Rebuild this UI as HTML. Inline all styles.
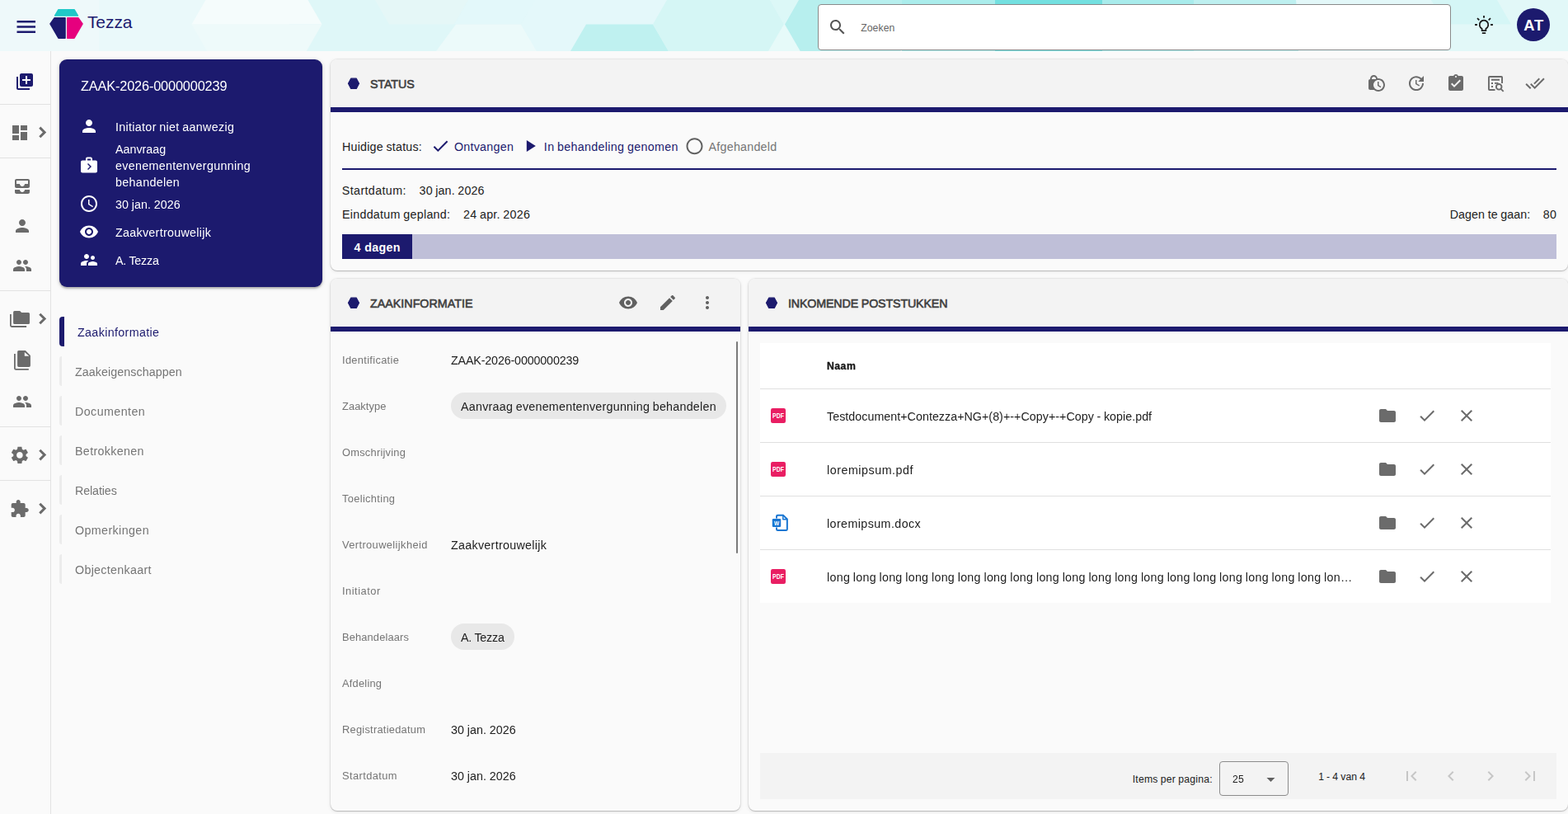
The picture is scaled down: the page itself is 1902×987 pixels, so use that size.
<!DOCTYPE html>
<html lang="nl">
<head>
<meta charset="utf-8">
<title>Tezza - ZAAK-2026-0000000239</title>
<style>
*{box-sizing:border-box;margin:0;padding:0}
html,body{width:1902px;height:987px;overflow:hidden;background:#fafafa}
body{position:relative;font-family:"Liberation Sans","DejaVu Sans",sans-serif;font-size:14px;color:#212121}
svg{display:block;position:absolute;overflow:visible}
.t{position:absolute;white-space:nowrap}
#hdr{position:absolute;left:0;top:0;width:1902px;height:62px;overflow:hidden;background:#e6f9fa}
#search{position:absolute;left:992px;top:5px;width:768px;height:56px;background:#fff;border:1px solid #8a8a8a;border-radius:4px}
#avatar{position:absolute;left:1840px;top:10px;width:40px;height:40px;border-radius:50%;background:#1c1a6e}
#rail{position:absolute;left:0;top:62px;width:62px;height:925px;border-right:1px solid #e2e2e2}
#menu{position:absolute;left:72px;top:384px;width:319px;height:324px}
#rail .dv{position:absolute;left:0;width:61px;height:1px;background:#e2e2e2}
#zcard{position:absolute;left:72px;top:72px;width:319px;height:276px;border-radius:9px;background:#1c1a6e;box-shadow:0 2px 2px rgba(0,0,0,.2),0 1px 5px rgba(0,0,0,.18)}
.mi{position:absolute;left:0;width:3px;height:36px;background:#ececec;border-radius:3px 0 0 3px}
.mi.act{width:6px;background:#1c1a6e;border-radius:4px 0 0 4px}
.card{position:absolute;background:#fafafa;border-radius:8px;box-shadow:0 0 0 1px rgba(0,0,0,.05),0 1px 1px rgba(0,0,0,.17),0 1px 5px rgba(0,0,0,.09)}
.hd{position:absolute;left:0;top:0;right:0;height:64px;background:#f3f3f3;border-bottom:6px solid #1c1a6e;border-radius:8px 8px 0 0}
.chip{position:absolute;height:32px;border-radius:16px;background:#e8e8e8}
.bx{position:absolute}
</style>
</head>
<body>
<div id="hdr">
<svg style="left:0;top:0" width="1902" height="62" viewBox="0 0 1902 62"><rect width="1902" height="62" fill="#e3f8fa"/><rect width="120" height="62" fill="#eef9fa"/><rect x="120" width="232" height="62" fill="#eaf9fa"/><rect x="351" width="289" height="62" fill="#dff7f8"/><polygon points="232.5,29.5 272,-39 351,-39 390.5,29.5" fill="#f5fcfc"/><polygon points="232.5,29.5 390.5,29.5 351,98 272,98" fill="#eefafa"/><polygon points="455,0 472,29.5 551,29.5 568,0" fill="#e5f7f7"/><polygon points="568,0 551,29.5 632,29.5 649,0" fill="#e3f8fa"/><polygon points="553,29.5 632,29.5 651,62 529,62" fill="#ecfafa"/><polygon points="632,29.5 649,0 832,0 792,29.5 711,29.5 692,62 651,62" fill="#e4f8fa"/><polygon points="711,29.5 792,29.5 811,62 692,62" fill="#bff1f0"/><polygon points="792,29.5 831.75,-39.5 911.25,-39.5 951,29.5 911.25,98.5 831.75,98.5" fill="#d5f6f5"/><polygon points="951,29.5 934,0 969,0" fill="#dcf8f7"/><polygon points="951,29.5 932,62 971,62" fill="#e6faf9"/><polygon points="952,29.5 991.75,-39.5 1071.25,-39.5 1111,29.5 1071.25,98.5 991.75,98.5" fill="#b7efee"/><rect x="1094" width="113" height="62" fill="#abedec"/><rect x="1207" width="130" height="62" fill="#74e0e0"/><rect x="1337" width="111" height="62" fill="#a9ecec"/><rect x="1448" width="127" height="62" fill="#bef0f0"/><polygon points="1572,0 1736,0 1753,29.500 1736,62 1578,62" fill="#e3f8f9"/><rect x="1736" width="166" height="62" fill="#e2f8f8"/><polygon points="1736,0 1816,0 1833,29.500 1753,29.500" fill="#d5f6f6"/></svg>

<svg style="left:16px;top:17px" width="30" height="30" viewBox="0 0 24 24"><g transform="translate(0.600 0.480)"><path fill="#1c1a6e" d="M3 18h18v-2H3v2zm0-5h18v-2H3v2zm0-7v2h18V6H3z"/></g></svg>
<svg style="left:60px;top:10px" width="41" height="38" viewBox="0 0 41 38"><g transform="translate(0 0.900)" stroke-linejoin="round" stroke-width="1.600"><path fill="#1fc8c8" stroke="#1fc8c8" d="M11 0.800h19l4.300 7.300H6.700z"/><path fill="#1c1a6e" stroke="#1c1a6e" d="M6 11h13V35.300h-8L1 18z"/><path fill="#e6007e" stroke="#e6007e" d="M21.800 11H35L40 18l-10 17.300h-8.200z"/></g></svg>

<div class="t" style="left:105.93px;top:15.40px;font-size:21px;line-height:24px;letter-spacing:-0.065px;color:#1c1a6e;">Tezza</div>
<div id="search">
<svg style="left:11px;top:15px" width="24" height="24" viewBox="0 0 24 24"><path fill="#555" d="M15.500 14h-.79l-.28-.270C15.410 12.590 16 11.110 16 9.500 16 5.910 13.090 3 9.500 3S3 5.910 3 9.500 5.910 16 9.500 16c1.610 0 3.090-.59 4.230-1.570l.27.280v.790l5 4.990L20.490 19l-4.990-5zm-6 0C7.010 14 5 11.990 5 9.500S7.010 5 9.500 5 14 7.010 14 9.500 11.990 14 9.500 14z"/></svg>
<div class="t" style="left:51.17px;top:20.00px;font-size:12.24px;line-height:16px;letter-spacing:0.075px;color:#666;">Zoeken</div>
</div>
<svg style="left:1788px;top:18px" width="24" height="24" viewBox="0 0 24 24"><g fill="none" stroke="#1a1a1a" stroke-width="1.800"><path d="M9.600 19.200V16.700A5.300 5.300 0 1 1 14.400 16.700V19.200z" stroke-linejoin="round"/><path d="M9.800 22.100h4.400M12 1.100v2.600M1.100 12h2.800M20.100 12h2.800M4 4.100l2.300 2.300M20 4.100l-2.300 2.300"/></g></svg>

<div id="avatar">
<div class="t" style="left:8.34px;top:9.70px;font-size:18.36px;line-height:22px;letter-spacing:0.688px;color:#fff;font-weight:bold;">AT</div>
</div>
</div>
<div id="rail">
<svg style="left:18px;top:25px" width="24" height="24" viewBox="0 0 24 24"><path fill="#1c1a6e" d="M4 6H2v14c0 1.100.9 2 2 2h14v-2H4V6zm16-4H8c-1.100 0-2 .9-2 2v12c0 1.100.9 2 2 2h12c1.100 0 2-.9 2-2V4c0-1.100-.9-2-2-2zm-1 9h-4v4h-2v-4H9V9h4V5h2v4h4v2z"/></svg>
<div class="dv" style="top:64px"></div>
<div class="dv" style="top:129px"></div>
<div class="dv" style="top:290px"></div>
<div class="dv" style="top:455px"></div>
<div class="dv" style="top:520px"></div>
<svg style="left:12px;top:87px" width="24" height="24" viewBox="0 0 24 24"><path fill="#6b6b6b" d="M3 13h8V3H3v10zm0 8h8v-6H3v6zm10 0h8V11h-8v10zm0-18v6h8V3h-8z"/></svg>
<svg style="left:39px;top:86px" width="24" height="24" viewBox="0 0 24 24"><g transform="translate(0.000 0.400)"><path fill="none" stroke="#6b6b6b" stroke-width="3" d="M9.280 6.200L15.080 12l-5.800 5.800"/></g></svg>
<svg style="left:15px;top:152px" width="24" height="24" viewBox="0 0 24 24"><path fill="#6b6b6b" d="M19 3H5c-1.100 0-2 .9-2 2v7c0 1.100.9 2 2 2h14c1.100 0 2-.9 2-2V5c0-1.100-.9-2-2-2zm0 6h-4c0 1.620-1.380 3-3 3s-3-1.380-3-3H5V5h14v4zm-4 7h6v3c0 1.100-.9 2-2 2H5c-1.100 0-2-.9-2-2v-3h6c0 1.660 1.340 3 3 3s3-1.340 3-3z"/></svg>
<svg style="left:15px;top:200px" width="24" height="24" viewBox="0 0 24 24"><path fill="#6b6b6b" d="M12 12c2.210 0 4-1.790 4-4s-1.790-4-4-4-4 1.790-4 4 1.790 4 4 4zm0 2c-2.670 0-8 1.340-8 4v2h16v-2c0-2.660-5.330-4-8-4z"/></svg>
<svg style="left:15px;top:248px" width="24" height="24" viewBox="0 0 24 24"><path fill="#6b6b6b" d="M16 11c1.660 0 2.990-1.340 2.990-3S17.660 5 16 5c-1.660 0-3 1.340-3 3s1.340 3 3 3zm-8 0c1.660 0 2.990-1.340 2.990-3S9.660 5 8 5C6.340 5 5 6.340 5 8s1.340 3 3 3zm0 2c-2.330 0-7 1.170-7 3.500V19h14v-2.500c0-2.330-4.670-3.500-7-3.500zm8 0c-.29 0-.62.020-.97.050 1.160.840 1.970 1.970 1.970 3.450V19h6v-2.500c0-2.330-4.670-3.500-7-3.500z"/></svg>
<svg style="left:12px;top:315px" width="24" height="20" viewBox="0 0 24 20"><path fill="none" stroke="#6b6b6b" stroke-width="1.800" d="M0.900 4V17.600q0 1.400 1.400 1.400H20.100"/><path fill="#6b6b6b" d="M5.600 0h6.500l2.100 2.100h8.300q1.500 0 1.500 1.500v10.800q0 1.500-1.500 1.500H5.600q-1.500 0-1.500-1.500V1.500Q4.100 0 5.600 0z"/></svg>
<svg style="left:39px;top:312px" width="24" height="24" viewBox="0 0 24 24"><g transform="translate(0.000 0.500)"><path fill="none" stroke="#6b6b6b" stroke-width="3" d="M9.280 6.200L15.080 12l-5.800 5.800"/></g></svg>
<svg style="left:17px;top:363px" width="20" height="24" viewBox="0 0 20 24"><path fill="none" stroke="#6b6b6b" stroke-width="1.800" d="M0.900 3.900V21.500q0 1.400 1.400 1.400H17.800"/><path fill="#6b6b6b" fill-rule="evenodd" d="M5.700 0h8.200l6 5.900v12.400q0 1.600-1.600 1.600H5.700q-1.600 0-1.600-1.600V1.600Q4.100 0 5.700 0zM12.800 1.900v4.900h5.500z"/></svg>
<svg style="left:15px;top:413px" width="24" height="24" viewBox="0 0 24 24"><path fill="#6b6b6b" d="M16 11c1.660 0 2.990-1.340 2.990-3S17.660 5 16 5c-1.660 0-3 1.340-3 3s1.340 3 3 3zm-8 0c1.660 0 2.990-1.340 2.990-3S9.660 5 8 5C6.340 5 5 6.340 5 8s1.340 3 3 3zm0 2c-2.330 0-7 1.170-7 3.500V19h14v-2.500c0-2.330-4.670-3.500-7-3.500zm8 0c-.29 0-.62.020-.97.050 1.160.840 1.970 1.970 1.970 3.450V19h6v-2.500c0-2.330-4.670-3.500-7-3.500z"/></svg>
<svg style="left:11px;top:477px" width="25.5" height="25.5" viewBox="0 0 24 24"><g transform="translate(0.141 0.141)"><path fill="#6b6b6b" d="M19.140 12.940c.040-.3.060-.610.060-.940 0-.320-.020-.640-.070-.940l2.030-1.580c.180-.140.230-.410.120-.610l-1.920-3.320c-.120-.220-.370-.290-.590-.220l-2.390.960c-.5-.380-1.030-.7-1.620-.940l-.360-2.540c-.040-.240-.240-.410-.480-.410h-3.840c-.240 0-.430.170-.470.410l-.360 2.540c-.590.240-1.130.570-1.620.940l-2.390-.960c-.220-.080-.470 0-.590.220L2.740 8.870c-.120.210-.080.470.120.610l2.030 1.580c-.050.3-.090.630-.090.940s.020.640.070.940l-2.030 1.580c-.180.140-.230.410-.120.610l1.920 3.320c.120.220.370.290.590.220l2.390-.960c.5.380 1.030.7 1.620.940l.360 2.540c.050.240.240.410.480.410h3.840c.240 0 .440-.170.470-.410l.360-2.540c.590-.240 1.130-.560 1.620-.940l2.390.960c.220.080.470 0 .590-.220l1.920-3.320c.120-.220.070-.470-.120-.610l-2.010-1.580zM12 15.600c-1.980 0-3.600-1.620-3.600-3.600s1.620-3.600 3.600-3.600 3.600 1.620 3.600 3.600-1.620 3.600-3.600 3.600z"/></g></svg>
<svg style="left:39px;top:477px" width="24" height="24" viewBox="0 0 24 24"><g transform="translate(0.000 0.600)"><path fill="none" stroke="#6b6b6b" stroke-width="3" d="M9.280 6.200L15.080 12l-5.800 5.800"/></g></svg>
<svg style="left:11px;top:542px" width="24" height="24" viewBox="0 0 24 24"><g transform="translate(0.700 0.900)"><path fill="#6b6b6b" d="M20.500 11H19V7c0-1.100-.9-2-2-2h-4V3.500C13 2.120 11.880 1 10.500 1S8 2.120 8 3.500V5H4c-1.100 0-1.990.9-1.990 2v3.800H3.500c1.490 0 2.700 1.210 2.700 2.700s-1.210 2.700-2.700 2.700H2V20c0 1.100.9 2 2 2h3.800v-1.500c0-1.490 1.210-2.700 2.700-2.700 1.490 0 2.700 1.210 2.700 2.700V22H17c1.100 0 2-.9 2-2v-4h1.500c1.380 0 2.500-1.120 2.500-2.500S21.880 11 20.500 11z"/></g></svg>
<svg style="left:39px;top:542px" width="24" height="24" viewBox="0 0 24 24"><g transform="translate(0.000 0.600)"><path fill="none" stroke="#6b6b6b" stroke-width="3" d="M9.280 6.200L15.080 12l-5.800 5.800"/></g></svg>
</div>
<div id="zcard">
<div class="t" style="left:26.00px;top:20.00px;font-size:16.32px;line-height:24px;letter-spacing:-0.157px;color:#fff;will-change:transform;">ZAAK-2026-0000000239</div>
<svg style="left:24px;top:69px" width="24" height="24" viewBox="0 0 24 24"><path fill="#fff" d="M12 12c2.210 0 4-1.790 4-4s-1.790-4-4-4-4 1.790-4 4 1.790 4 4 4zm0 2c-2.670 0-8 1.340-8 4v2h16v-2c0-2.660-5.330-4-8-4z"/></svg>
<div class="t" style="left:68.00px;top:72.00px;font-size:14.28px;line-height:20px;letter-spacing:0.325px;color:#fff;word-spacing:-0.656px;will-change:transform;">Initiator niet aanwezig</div>
<svg style="left:24px;top:115px" width="24" height="24" viewBox="0 0 24 24"><g transform="translate(0.000 0.600)"><path fill="#fff" d="M20 7h-4V5c0-.55-.22-1.050-.59-1.410C15.050 3.220 14.550 3 14 3h-4c-1.100 0-2 .9-2 2v2H4c-1.100 0-2 .9-2 2v11c0 1.100.9 2 2 2h16c1.100 0 2-.9 2-2V9c0-1.100-.9-2-2-2zM10 5h4v2h-4V5zm1 13.500l-1-1 3-3-3-3 1-1 4 4-4 4z"/></g></svg>
<div class="t" style="left:68.00px;top:99.00px;font-size:14.28px;line-height:20px;letter-spacing:0.011px;color:#fff;will-change:transform;">Aanvraag</div>
<div class="t" style="left:68.00px;top:119.00px;font-size:14.28px;line-height:20px;letter-spacing:0.333px;color:#fff;will-change:transform;">evenementenvergunning</div>
<div class="t" style="left:68.00px;top:139.00px;font-size:14.28px;line-height:20px;letter-spacing:0.353px;color:#fff;will-change:transform;">behandelen</div>
<svg style="left:24px;top:163px" width="24" height="24" viewBox="0 0 24 24"><path fill="#fff" d="M11.990 2C6.470 2 2 6.480 2 12s4.470 10 9.990 10C17.520 22 22 17.520 22 12S17.520 2 11.990 2zM12 20c-4.420 0-8-3.580-8-8s3.580-8 8-8 8 3.580 8 8-3.580 8-8 8zm.5-13H11v6l5.250 3.150.75-1.230-4.500-2.670z"/></svg>
<div class="t" style="left:68.00px;top:166.00px;font-size:14.28px;line-height:20px;letter-spacing:0.100px;color:#fff;word-spacing:-0.431px;will-change:transform;">30 jan. 2026</div>
<svg style="left:24px;top:197px" width="24" height="24" viewBox="0 0 24 24"><path fill="#fff" d="M12 4.500C7 4.500 2.730 7.610 1 12c1.730 4.390 6 7.500 11 7.500s9.270-3.110 11-7.500c-1.730-4.390-6-7.500-11-7.500zM12 17c-2.760 0-5-2.240-5-5s2.240-5 5-5 5 2.240 5 5-2.240 5-5 5zm0-8c-1.660 0-3 1.340-3 3s1.340 3 3 3 3-1.340 3-3-1.340-3-3-3z"/></svg>
<div class="t" style="left:68.00px;top:200.00px;font-size:14.28px;line-height:20px;letter-spacing:0.301px;color:#fff;will-change:transform;">Zaakvertrouwelijk</div>
<svg style="left:24px;top:231px" width="24" height="24" viewBox="0 0 24 24"><path fill="#fff" d="M16.500 12c1.380 0 2.490-1.120 2.490-2.500S17.880 7 16.500 7C15.120 7 14 8.120 14 9.500s1.120 2.500 2.500 2.500zM9 11c1.660 0 2.990-1.340 2.990-3S10.660 5 9 5C7.340 5 6 6.340 6 8s1.340 3 3 3zm7.500 3c-1.830 0-5.500.92-5.500 2.750V19h11v-2.250c0-1.830-3.670-2.750-5.500-2.750zM9 13c-2.330 0-7 1.170-7 3.500V19h7v-2.250c0-.85.33-2.340 2.370-3.470C10.500 13.100 9.660 13 9 13z"/></svg>
<div class="t" style="left:68.00px;top:234.00px;font-size:14.28px;line-height:20px;letter-spacing:-0.210px;color:#fff;word-spacing:-0.121px;will-change:transform;">A. Tezza</div>
</div>
<nav id="menu">
<div class="mi act" style="top:0px"></div>
<div class="t" style="left:22.00px;top:9.00px;font-size:14.28px;line-height:20px;letter-spacing:0.359px;color:#1c1a6e;will-change:transform;">Zaakinformatie</div>
<div class="mi" style="top:48px"></div>
<div class="t" style="left:19.00px;top:57.00px;font-size:14.28px;line-height:20px;letter-spacing:0.071px;color:#757575;will-change:transform;">Zaakeigenschappen</div>
<div class="mi" style="top:96px"></div>
<div class="t" style="left:19.00px;top:105.00px;font-size:14.28px;line-height:20px;letter-spacing:0.424px;color:#757575;will-change:transform;">Documenten</div>
<div class="mi" style="top:144px"></div>
<div class="t" style="left:19.00px;top:153.00px;font-size:14.28px;line-height:20px;letter-spacing:0.345px;color:#757575;will-change:transform;">Betrokkenen</div>
<div class="mi" style="top:192px"></div>
<div class="t" style="left:19.00px;top:201.00px;font-size:14.28px;line-height:20px;letter-spacing:-0.105px;color:#757575;will-change:transform;">Relaties</div>
<div class="mi" style="top:240px"></div>
<div class="t" style="left:19.00px;top:249.00px;font-size:14.28px;line-height:20px;letter-spacing:0.395px;color:#757575;will-change:transform;">Opmerkingen</div>
<div class="mi" style="top:288px"></div>
<div class="t" style="left:19.00px;top:297.00px;font-size:14.28px;line-height:20px;letter-spacing:0.301px;color:#757575;will-change:transform;">Objectenkaart</div>
</nav>
<div class="card" id="status" style="left:401px;top:72px;width:1501px;height:256px">
<div class="hd"></div>
<svg style="left:16px;top:17px" width="24" height="24" viewBox="0 0 24 24"><g transform="translate(0.000 0.300)"><path fill="#1c1a6e" stroke="#1c1a6e" stroke-width="1.2" stroke-linejoin="round" d="M5.500 12l3.200-6.100h6.600L18.500 12l-3.200 6.100H8.700z"/></g></svg>
<div class="t" style="left:47.91px;top:20.00px;font-size:14.28px;line-height:20px;letter-spacing:-0.063px;color:#404040;-webkit-text-stroke:0.6px #404040;">STATUS</div>
<svg style="left:1257px;top:17px" width="24" height="24" viewBox="0 0 24 24"><path fill="#6b6b6b" d="M14.500 14.200l2.900 1.700-.8 1.300L13 15v-5h1.500v4.200zM22 14c0 4.410-3.590 8-8 8-2.020 0-3.860-.76-5.270-2H4c-1.150 0-2-.85-2-2V9c0-1.120.89-1.960 2-2v-.5C4 4.010 6.010 2 8.500 2c2.340 0 4.240 1.790 4.460 4.080.34-.05.69-.08 1.040-.08 4.410 0 8 3.590 8 8zM6 7h5v-.74C10.880 4.990 9.800 4 8.500 4 7.120 4 6 5.120 6 6.500V7zm14 7c0-3.310-2.690-6-6-6s-6 2.690-6 6 2.690 6 6 6 6-2.690 6-6z"/></svg>
<svg style="left:1305px;top:17px" width="24" height="24" viewBox="0 0 24 24"><path fill="#6b6b6b" d="M21 10.120h-6.780l2.740-2.820c-2.730-2.700-7.150-2.800-9.880-.1-2.730 2.710-2.730 7.080 0 9.790s7.150 2.710 9.880 0C18.320 15.650 19 14.080 19 12.100h2c0 1.980-.88 4.550-2.640 6.290-3.510 3.480-9.210 3.480-12.720 0-3.500-3.470-3.530-9.110-.02-12.580s9.140-3.470 12.650 0L21 3v7.120zM12.500 8v4.250l3.500 2.080-.72 1.210L11 13V8h1.500z"/></svg>
<svg style="left:1353px;top:17px" width="24" height="24" viewBox="0 0 24 24"><path fill="#6b6b6b" d="M19 3h-4.180C14.400 1.840 13.300 1 12 1c-1.300 0-2.400.84-2.820 2H5c-1.100 0-2 .9-2 2v14c0 1.100.9 2 2 2h14c1.100 0 2-.9 2-2V5c0-1.100-.9-2-2-2zm-7 0c.55 0 1 .45 1 1s-.45 1-1 1-1-.45-1-1 .45-1 1-1zm-2 14l-4-4 1.410-1.410L10 14.170l6.590-6.590L18 9l-8 8z"/></svg>
<svg style="left:1401px;top:17px" width="24" height="24" viewBox="0 0 24 24"><g fill="none" stroke="#6b6b6b" stroke-width="1.900"><path d="M11.500 20.050H4.800q-.85 0-.85-.85V4.800q0-.85.85-.85h14.400q.85 0 .85.850v7.200"/><circle cx="16.200" cy="16.300" r="3.300"/><path d="M18.600 18.800l3.100 3.100"/></g><path fill="#6b6b6b" d="M7 6.800h10v2H7zM7 11h2v2H7zM11 11h4.500v1.800H11zM7 15h2v2H7z"/></svg>
<svg style="left:1449px;top:17px" width="24" height="24" viewBox="0 0 24 24"><path fill="#6b6b6b" d="M18 7l-1.410-1.410-6.340 6.340 1.410 1.410L18 7zm4.240-1.410L11.660 16.170 7.480 12l-1.410 1.410L11.660 19l12-12-1.420-1.410zM.410 13.410L6 19l1.410-1.410L1.830 12 .410 13.410z"/></svg>
<div class="t" style="left:14.00px;top:96.00px;font-size:14.28px;line-height:20px;letter-spacing:0.212px;color:#212121;word-spacing:-0.542px;">Huidige status:</div>
<svg style="left:121px;top:93px" width="24" height="24" viewBox="0 0 24 24"><g transform="translate(0.300 0.000)"><path fill="#1c1a6e" d="M9 16.170L4.830 12l-1.420 1.410L9 19 21 7l-1.410-1.410z"/></g></svg>
<div class="t" style="left:149.96px;top:96.00px;font-size:14.28px;line-height:20px;letter-spacing:0.260px;color:#1c1a6e;">Ontvangen</div>
<svg style="left:229px;top:93px" width="24" height="24" viewBox="0 0 24 24"><g transform="translate(0.800 0.000)"><path fill="#1c1a6e" d="M8 5v14l11-7z"/></g></svg>
<div class="t" style="left:258.85px;top:96.00px;font-size:14.28px;line-height:20px;letter-spacing:0.322px;color:#1c1a6e;word-spacing:-0.653px;">In behandeling genomen</div>
<svg style="left:429px;top:93px" width="24" height="24" viewBox="0 0 24 24"><g transform="translate(0.500 0.200)"><path fill="#616161" d="M12 2C6.480 2 2 6.480 2 12s4.480 10 10 10 10-4.480 10-10S17.520 2 12 2zm0 18c-4.420 0-8-3.580-8-8s3.580-8 8-8 8 3.580 8 8-3.580 8-8 8z"/></g></svg>
<div class="t" style="left:458.57px;top:96.00px;font-size:14.28px;line-height:20px;letter-spacing:0.245px;color:#757575;">Afgehandeld</div>
<div class="bx" style="left:14px;top:132px;width:1473px;height:2px;background:#1c1a6e"></div>
<div class="t" style="left:13.81px;top:149.00px;font-size:14.28px;line-height:20px;letter-spacing:0.390px;color:#212121;">Startdatum:</div>
<div class="t" style="left:107.62px;top:149.00px;font-size:14.28px;line-height:20px;letter-spacing:0.100px;color:#212121;word-spacing:-0.431px;">30 jan. 2026</div>
<div class="t" style="left:14.00px;top:178.00px;font-size:14.28px;line-height:20px;letter-spacing:0.276px;color:#212121;word-spacing:-0.606px;">Einddatum gepland:</div>
<div class="t" style="left:161.04px;top:178.00px;font-size:14.28px;line-height:20px;letter-spacing:0.236px;color:#212121;word-spacing:-0.567px;">24 apr. 2026</div>
<div class="t" style="left:1357.70px;top:178.00px;font-size:14.28px;line-height:20px;letter-spacing:0.062px;color:#212121;word-spacing:-0.393px;">Dagen te gaan:</div>
<div class="t" style="left:1470.84px;top:178.00px;font-size:14.28px;line-height:20px;letter-spacing:0.126px;color:#212121;">80</div>
<div class="bx" style="left:14px;top:212px;width:1473px;height:30px;background:#bfbfd8"></div>
<div class="bx" style="left:14px;top:212px;width:85px;height:30px;background:#1c1a6e"></div>
<div class="t" style="left:28.62px;top:217.50px;font-size:14.28px;line-height:20px;letter-spacing:0.340px;color:#fff;font-weight:bold;">4 dagen</div>
</div>
<div class="card" id="info" style="left:401px;top:338px;width:497px;height:645px">
<div class="hd"></div>
<svg style="left:16px;top:17px" width="24" height="24" viewBox="0 0 24 24"><g transform="translate(0.000 0.300)"><path fill="#1c1a6e" stroke="#1c1a6e" stroke-width="1.2" stroke-linejoin="round" d="M5.500 12l3.200-6.100h6.600L18.500 12l-3.200 6.100H8.700z"/></g></svg>
<div class="t" style="left:47.97px;top:20.00px;font-size:14.28px;line-height:20px;letter-spacing:0.023px;color:#404040;-webkit-text-stroke:0.6px #404040;">ZAAKINFORMATIE</div>
<svg style="left:349px;top:17px" width="24" height="24" viewBox="0 0 24 24"><path fill="#616161" d="M12 4.500C7 4.500 2.730 7.610 1 12c1.730 4.390 6 7.500 11 7.500s9.270-3.110 11-7.500c-1.730-4.390-6-7.500-11-7.500zM12 17c-2.760 0-5-2.240-5-5s2.240-5 5-5 5 2.240 5 5-2.240 5-5 5zm0-8c-1.660 0-3 1.340-3 3s1.340 3 3 3 3-1.340 3-3-1.340-3-3-3z"/></svg>
<svg style="left:397px;top:17px" width="24" height="24" viewBox="0 0 24 24"><path fill="#616161" d="M3 17.250V21h3.750L17.810 9.940l-3.750-3.750L3 17.250zM20.710 7.040c.39-.39.39-1.020 0-1.410l-2.340-2.340c-.39-.39-1.020-.39-1.410 0l-1.830 1.830 3.750 3.750 1.830-1.830z"/></svg>
<svg style="left:445px;top:17px" width="24" height="24" viewBox="0 0 24 24"><path fill="#616161" d="M12 8c1.100 0 2-.9 2-2s-.9-2-2-2-2 .9-2 2 .9 2 2 2zm0 2c-1.100 0-2 .9-2 2s.9 2 2 2 2-.9 2-2-.9-2-2-2zm0 6c-1.100 0-2 .9-2 2s.9 2 2 2 2-.9 2-2-.9-2-2-2z"/></svg>
<div class="bx" style="left:492px;top:76px;width:2px;height:257px;background:#7a7a7a;border-radius:1px"></div>
<div class="t" style="left:14.00px;top:89.50px;font-size:12.85px;line-height:18px;letter-spacing:0.320px;color:#757575;will-change:transform;">Identificatie</div>
<div class="t" style="left:146.00px;top:89.00px;font-size:14.28px;line-height:20px;letter-spacing:-0.138px;color:#212121;will-change:transform;">ZAAK-2026-0000000239</div>
<div class="t" style="left:14.00px;top:145.50px;font-size:12.85px;line-height:18px;letter-spacing:0.075px;color:#757575;will-change:transform;">Zaaktype</div>
<div class="chip" style="left:146px;top:138px;width:334.374px;height:32px;"></div>
<div class="t" style="left:158.00px;top:145.00px;font-size:14.28px;line-height:20px;letter-spacing:0.254px;color:#212121;word-spacing:-0.585px;will-change:transform;">Aanvraag evenementenvergunning behandelen</div>
<div class="t" style="left:14.00px;top:201.50px;font-size:12.85px;line-height:18px;letter-spacing:0.243px;color:#757575;will-change:transform;">Omschrijving</div>
<div class="t" style="left:14.00px;top:257.50px;font-size:12.85px;line-height:18px;letter-spacing:0.331px;color:#757575;will-change:transform;">Toelichting</div>
<div class="t" style="left:14.00px;top:313.50px;font-size:12.85px;line-height:18px;letter-spacing:0.391px;color:#757575;will-change:transform;">Vertrouwelijkheid</div>
<div class="t" style="left:146.00px;top:313.00px;font-size:14.28px;line-height:20px;letter-spacing:0.301px;color:#212121;will-change:transform;">Zaakvertrouwelijk</div>
<div class="t" style="left:14.00px;top:369.50px;font-size:12.85px;line-height:18px;letter-spacing:0.517px;color:#757575;will-change:transform;">Initiator</div>
<div class="t" style="left:14.00px;top:425.50px;font-size:12.85px;line-height:18px;letter-spacing:0.141px;color:#757575;will-change:transform;">Behandelaars</div>
<div class="chip" style="left:146px;top:418px;width:76.9051px;height:32px;"></div>
<div class="t" style="left:158.00px;top:425.00px;font-size:14.28px;line-height:20px;letter-spacing:-0.210px;color:#212121;word-spacing:-0.121px;will-change:transform;">A. Tezza</div>
<div class="t" style="left:14.00px;top:481.50px;font-size:12.85px;line-height:18px;letter-spacing:0.229px;color:#757575;will-change:transform;">Afdeling</div>
<div class="t" style="left:14.00px;top:537.50px;font-size:12.85px;line-height:18px;letter-spacing:0.251px;color:#757575;will-change:transform;">Registratiedatum</div>
<div class="t" style="left:146.00px;top:537.00px;font-size:14.28px;line-height:20px;letter-spacing:0.100px;color:#212121;word-spacing:-0.431px;will-change:transform;">30 jan. 2026</div>
<div class="t" style="left:14.00px;top:593.50px;font-size:12.85px;line-height:18px;letter-spacing:0.416px;color:#757575;will-change:transform;">Startdatum</div>
<div class="t" style="left:146.00px;top:593.00px;font-size:14.28px;line-height:20px;letter-spacing:0.100px;color:#212121;word-spacing:-0.431px;will-change:transform;">30 jan. 2026</div>
</div>
<div class="card" id="post" style="left:908px;top:338px;width:994px;height:645px">
<div class="hd"></div>
<svg style="left:16px;top:17px" width="24" height="24" viewBox="0 0 24 24"><g transform="translate(0.000 0.300)"><path fill="#1c1a6e" stroke="#1c1a6e" stroke-width="1.2" stroke-linejoin="round" d="M5.500 12l3.200-6.100h6.600L18.500 12l-3.200 6.100H8.700z"/></g></svg>
<div class="t" style="left:48.05px;top:20.00px;font-size:14.28px;line-height:20px;letter-spacing:-0.159px;color:#404040;-webkit-text-stroke:0.6px #404040;">INKOMENDE POSTSTUKKEN</div>
<div class="bx" style="left:14px;top:78px;width:959px;height:315px;background:#fff"></div>
<div class="t" style="left:95.00px;top:98.00px;font-size:12.24px;line-height:16px;letter-spacing:0.488px;color:#161616;font-weight:bold;-webkit-text-stroke:0.3px #161616;will-change:transform;">Naam</div>
<div class="bx" style="left:14px;top:133px;width:959px;height:1px;background:#e0e0e0"></div>
<svg style="left:27px;top:157px" width="18" height="18" viewBox="0 0 18 18"><rect width="18" height="18" rx="2.200" fill="#e91e63"/><text x="9" y="12.100" text-anchor="middle" font-family="Liberation Sans,DejaVu Sans,sans-serif" font-weight="bold" font-size="8.400" textLength="13.800" lengthAdjust="spacingAndGlyphs" fill="#fff">PDF</text></svg>
<div class="t" style="left:95.00px;top:156.60px;font-size:14.28px;line-height:20px;letter-spacing:0.036px;color:#212121;word-spacing:-0.367px;will-change:transform;">Testdocument+Contezza+NG+(8)+-+Copy+-+Copy - kopie.pdf</div>
<svg style="left:763px;top:154px" width="24" height="24" viewBox="0 0 24 24"><path fill="#6b6b6b" d="M10 4H4c-1.100 0-1.990.9-1.990 2L2 18c0 1.100.9 2 2 2h16c1.100 0 2-.9 2-2V8c0-1.100-.9-2-2-2h-8l-2-2z"/></svg>
<svg style="left:811px;top:154px" width="24" height="24" viewBox="0 0 24 24"><path fill="#6b6b6b" d="M9 16.170L4.830 12l-1.420 1.410L9 19 21 7l-1.410-1.410z"/></svg>
<svg style="left:859px;top:154px" width="24" height="24" viewBox="0 0 24 24"><path fill="#6b6b6b" d="M19 6.410L17.590 5 12 10.590 6.410 5 5 6.410 10.590 12 5 17.590 6.410 19 12 13.410 17.590 19 19 17.590 13.410 12z"/></svg>
<div class="bx" style="left:14px;top:198px;width:959px;height:1px;background:#e0e0e0"></div>
<svg style="left:27px;top:222px" width="18" height="18" viewBox="0 0 18 18"><rect width="18" height="18" rx="2.200" fill="#e91e63"/><text x="9" y="12.100" text-anchor="middle" font-family="Liberation Sans,DejaVu Sans,sans-serif" font-weight="bold" font-size="8.400" textLength="13.800" lengthAdjust="spacingAndGlyphs" fill="#fff">PDF</text></svg>
<div class="t" style="left:95.00px;top:221.60px;font-size:14.28px;line-height:20px;letter-spacing:0.539px;color:#212121;will-change:transform;">loremipsum.pdf</div>
<svg style="left:763px;top:219px" width="24" height="24" viewBox="0 0 24 24"><path fill="#6b6b6b" d="M10 4H4c-1.100 0-1.990.9-1.990 2L2 18c0 1.100.9 2 2 2h16c1.100 0 2-.9 2-2V8c0-1.100-.9-2-2-2h-8l-2-2z"/></svg>
<svg style="left:811px;top:219px" width="24" height="24" viewBox="0 0 24 24"><path fill="#6b6b6b" d="M9 16.170L4.830 12l-1.420 1.410L9 19 21 7l-1.410-1.410z"/></svg>
<svg style="left:859px;top:219px" width="24" height="24" viewBox="0 0 24 24"><path fill="#6b6b6b" d="M19 6.410L17.590 5 12 10.590 6.410 5 5 6.410 10.590 12 5 17.590 6.410 19 12 13.410 17.590 19 19 17.590 13.410 12z"/></svg>
<div class="bx" style="left:14px;top:263px;width:959px;height:1px;background:#e0e0e0"></div>
<svg style="left:27px;top:284px" width="24" height="24" viewBox="0 0 24 24"><path fill="none" stroke="#1976d2" stroke-width="2" stroke-linejoin="round" d="M7 6.500V4.300q0-1.450 1.450-1.450h6.700l4.700 4.700v12.100q0 1.450-1.450 1.450H8.450Q7 21.100 7 19.650V17.500"/><path fill="none" stroke="#1976d2" stroke-width="1.500" stroke-linejoin="round" d="M14.800 3.200v4.600h4.700"/><rect x="1.800" y="7" width="10.400" height="10" rx="1.300" fill="#1976d2"/><text x="7" y="14.600" text-anchor="middle" font-family="Liberation Sans,DejaVu Sans,sans-serif" font-weight="bold" font-size="6.500" fill="#fff">W</text></svg>
<div class="t" style="left:95.00px;top:286.60px;font-size:14.28px;line-height:20px;letter-spacing:0.417px;color:#212121;will-change:transform;">loremipsum.docx</div>
<svg style="left:763px;top:284px" width="24" height="24" viewBox="0 0 24 24"><path fill="#6b6b6b" d="M10 4H4c-1.100 0-1.990.9-1.990 2L2 18c0 1.100.9 2 2 2h16c1.100 0 2-.9 2-2V8c0-1.100-.9-2-2-2h-8l-2-2z"/></svg>
<svg style="left:811px;top:284px" width="24" height="24" viewBox="0 0 24 24"><path fill="#6b6b6b" d="M9 16.170L4.830 12l-1.420 1.410L9 19 21 7l-1.410-1.410z"/></svg>
<svg style="left:859px;top:284px" width="24" height="24" viewBox="0 0 24 24"><path fill="#6b6b6b" d="M19 6.410L17.590 5 12 10.590 6.410 5 5 6.410 10.590 12 5 17.590 6.410 19 12 13.410 17.590 19 19 17.590 13.410 12z"/></svg>
<div class="bx" style="left:14px;top:328px;width:959px;height:1px;background:#e0e0e0"></div>
<svg style="left:27px;top:352px" width="18" height="18" viewBox="0 0 18 18"><rect width="18" height="18" rx="2.200" fill="#e91e63"/><text x="9" y="12.100" text-anchor="middle" font-family="Liberation Sans,DejaVu Sans,sans-serif" font-weight="bold" font-size="8.400" textLength="13.800" lengthAdjust="spacingAndGlyphs" fill="#fff">PDF</text></svg>
<div class="t" style="left:95.00px;top:351.60px;font-size:14.28px;line-height:20px;letter-spacing:0.284px;color:#212121;word-spacing:-0.614px;will-change:transform;">long long long long long long long long long long long long long long long long long long long lon…</div>
<svg style="left:763px;top:349px" width="24" height="24" viewBox="0 0 24 24"><path fill="#6b6b6b" d="M10 4H4c-1.100 0-1.990.9-1.990 2L2 18c0 1.100.9 2 2 2h16c1.100 0 2-.9 2-2V8c0-1.100-.9-2-2-2h-8l-2-2z"/></svg>
<svg style="left:811px;top:349px" width="24" height="24" viewBox="0 0 24 24"><path fill="#6b6b6b" d="M9 16.170L4.830 12l-1.420 1.410L9 19 21 7l-1.410-1.410z"/></svg>
<svg style="left:859px;top:349px" width="24" height="24" viewBox="0 0 24 24"><path fill="#6b6b6b" d="M19 6.410L17.590 5 12 10.590 6.410 5 5 6.410 10.590 12 5 17.590 6.410 19 12 13.410 17.590 19 19 17.590 13.410 12z"/></svg>
<div class="bx" style="left:14px;top:575px;width:966px;height:56px;background:#f3f3f3"></div>
<div class="t" style="left:465.65px;top:599.00px;font-size:12.24px;line-height:16px;letter-spacing:0.219px;color:#212121;word-spacing:-0.502px;">Items per pagina:</div>
<div class="bx" style="left:571px;top:585px;width:84px;height:42px;border:1px solid #8c8c8c;border-radius:4px"></div>
<div class="t" style="left:587.00px;top:599.00px;font-size:12.24px;line-height:16px;letter-spacing:0.108px;color:#212121;will-change:transform;">25</div>
<svg style="left:621px;top:595px" width="24" height="24" viewBox="0 0 24 24"><g transform="translate(0.500 0.000)"><path fill="#616161" d="M7 10l5 5 5-5z"/></g></svg>
<div class="t" style="left:691.15px;top:596.30px;font-size:12.24px;line-height:16px;letter-spacing:0.038px;color:#212121;word-spacing:-0.321px;">1 - 4 van 4</div>
<svg style="left:792px;top:591px" width="24" height="24" viewBox="0 0 24 24"><path fill="#c6c6c6" d="M18.410 16.590L13.820 12l4.590-4.590L17 6l-6 6 6 6zM6 6h2v12H6z"/></svg>
<svg style="left:840px;top:591px" width="24" height="24" viewBox="0 0 24 24"><path fill="#c6c6c6" d="M15.410 7.410L14 6l-6 6 6 6 1.410-1.410L10.830 12z"/></svg>
<svg style="left:888px;top:591px" width="24" height="24" viewBox="0 0 24 24"><path fill="#c6c6c6" d="M10 6L8.590 7.410 13.170 12l-4.580 4.590L10 18l6-6z"/></svg>
<svg style="left:936px;top:591px" width="24" height="24" viewBox="0 0 24 24"><path fill="#c6c6c6" d="M5.590 7.410L10.180 12l-4.590 4.590L7 18l6-6-6-6zM16 6h2v12h-2z"/></svg>
</div>
</body>
</html>
